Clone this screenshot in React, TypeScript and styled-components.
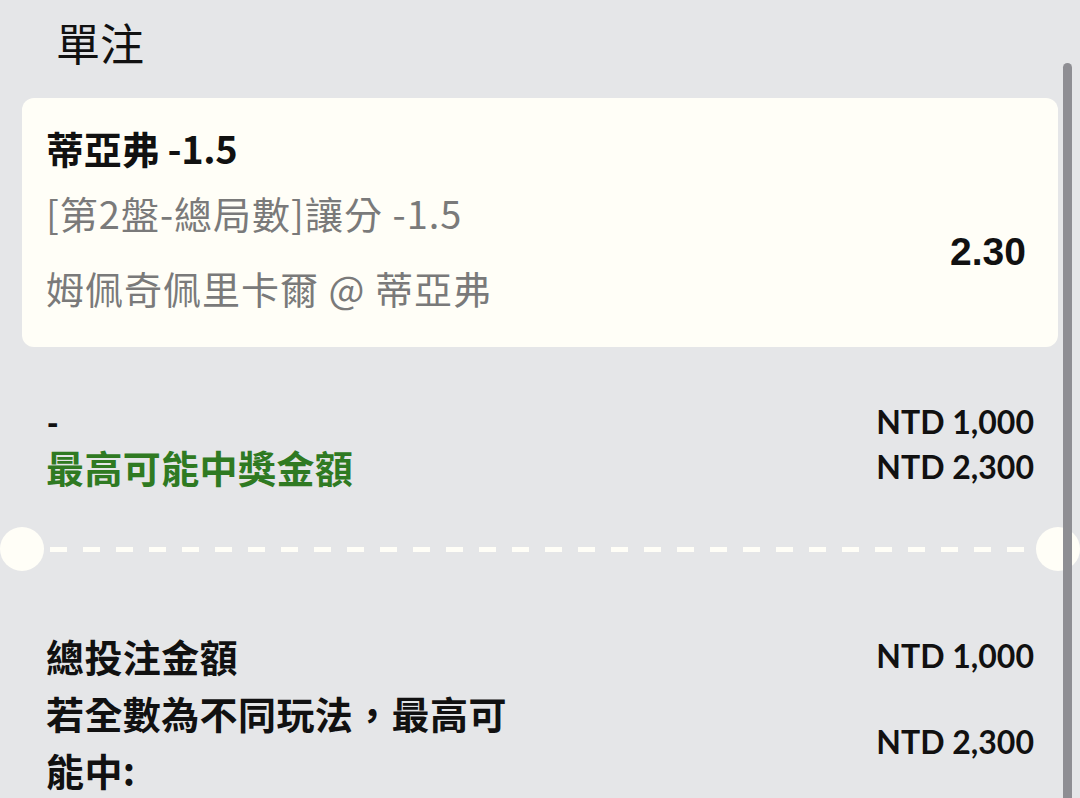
import React from "react";
import styled, { createGlobalStyle } from "styled-components";

const Global = createGlobalStyle`
  html, body { margin: 0; padding: 0; background: #e5e6e8; }
  body { font-family: "Noto Sans CJK TC", "Noto Sans", sans-serif; color: #111; overflow: hidden; }
`;

const Page = styled.div`
  position: relative;
  width: 1080px;
  height: 798px;
  overflow: hidden;
  background: #e5e6e8;
`;

const Header = styled.div`
  height: 90px;
  line-height: 84px;
  padding-left: 56px;
  font-size: 44px;
  font-weight: 400;
  color: #111;
`;

const Card = styled.div`
  margin: 8px 22px 0;
  height: 249px;
  box-sizing: border-box;
  padding: 22px 32px 22px 24px;
  background: #fffef7;
  border-radius: 12px;
  display: flex;
  align-items: center;
`;

const CardInfo = styled.div`
  flex: 1;
  display: flex;
  flex-direction: column;
  align-self: stretch;
`;

const BetTitle = styled.div`
  font-size: 38px;
  font-weight: 700;
  line-height: 55px;
  color: #111;
  letter-spacing: -0.3px;
`;

const BetLine = styled.div`
  font-size: 38px;
  font-weight: 400;
  line-height: 75px;
  color: #7a7a7a;
  letter-spacing: 1px;
`;

const Odds = styled.div`
  margin-top: 58px;
  font-family: "Liberation Sans", Arial, sans-serif;
  font-weight: 700;
  font-size: 39px;
  color: #111;
`;

const Section = styled.div<{ $top: number }>`
  margin-top: ${(p) => p.$top}px;
  padding: 0 46px;
  display: flex;
  flex-direction: column;
`;

const Row = styled.div<{ $lh: number }>`
  display: flex;
  justify-content: space-between;
  align-items: center;
  line-height: ${(p) => p.$lh}px;
`;

const Label = styled.div<{ $tone?: "green" | "dark"; $maxW?: number }>`
  font-size: 38px;
  font-weight: 700;
  color: ${(p) => (p.$tone === "green" ? "#2f7a22" : "#111")};
  max-width: ${(p) => (p.$maxW ? `${p.$maxW}px` : "none")};
  letter-spacing: 0.4px;
`;

const DashMark = styled.div`
  font-size: 30px;
  font-weight: 900;
  color: #111;
  padding-left: 1px;
`;

const Amount = styled.div`
  font-family: Lato, "Liberation Sans", sans-serif;
  font-weight: 700;
  font-size: 32px;
  color: #111;
  white-space: nowrap;
`;

const Divider = styled.div`
  margin-top: 38px;
  height: 44px;
  display: flex;
  align-items: center;
`;

const Notch = styled.div`
  width: 44px;
  height: 44px;
  border-radius: 50%;
  background: #fffef7;
  flex: none;
`;

const Dashes = styled.div`
  flex: 1;
  height: 5px;
  margin: 0 1px 0 6px;
  background-image: linear-gradient(to right, #fffef7 0 17px, transparent 17px 33px);
  background-size: 33px 5px;
  background-repeat: repeat-x;
`;

const ScrollThumb = styled.div`
  position: absolute;
  right: 8px;
  top: 63px;
  width: 9px;
  height: 760px;
  border-radius: 5px;
  background: #8e8e93;
`;

export default function App() {
  return (
    <Page>
      <Global />
      <Header>單注</Header>
      <Card>
        <CardInfo>
          <BetTitle>蒂亞弗 -1.5</BetTitle>
          <BetLine>[第2盤-總局數]讓分 -1.5</BetLine>
          <BetLine>姆佩奇佩里卡爾 @ 蒂亞弗</BetLine>
        </CardInfo>
        <Odds>2.30</Odds>
      </Card>
      <Section $top={52}>
        <Row $lh={45}>
          <DashMark>-</DashMark>
          <Amount>NTD 1,000</Amount>
        </Row>
        <Row $lh={45}>
          <Label $tone="green">最高可能中獎金額</Label>
          <Amount>NTD 2,300</Amount>
        </Row>
      </Section>
      <Divider>
        <Notch />
        <Dashes />
        <Notch />
      </Divider>
      <Section $top={56}>
        <Row $lh={57}>
          <Label>總投注金額</Label>
          <Amount>NTD 1,000</Amount>
        </Row>
        <Row $lh={57}>
          <Label $maxW={490}>若全數為不同玩法，最高可能中:</Label>
          <Amount>NTD 2,300</Amount>
        </Row>
      </Section>
      <ScrollThumb />
    </Page>
  );
}
